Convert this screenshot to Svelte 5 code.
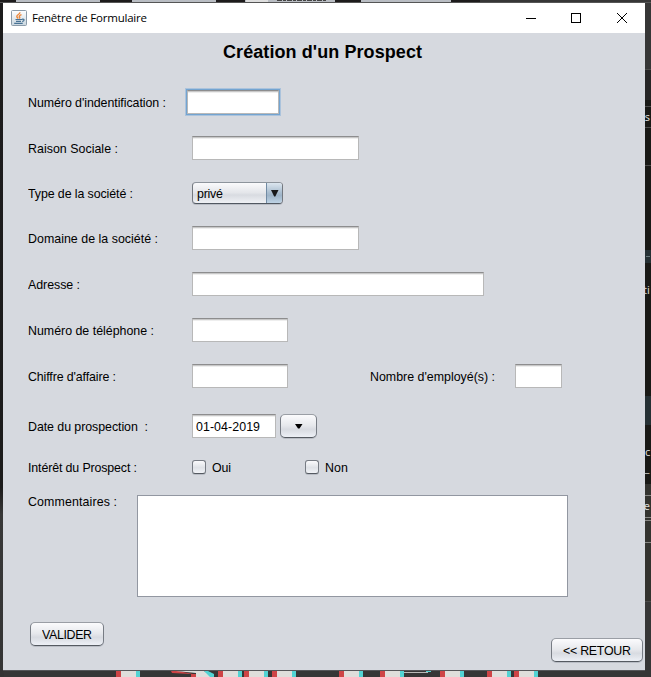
<script>
  const stripes = [116, 218, 244, 272, 339, 380, 440, 487, 514];
  const fields = [
    { label: 'Raison Sociale :', top: 136, width: 167, text: 90 },
    { label: 'Type de la société :', top: 181, select: 'privé', text: 105 },
    { label: 'Domaine de la société :', top: 226, width: 167, text: 130 },
    { label: 'Adresse :', top: 272, width: 292, text: 52 },
    { label: 'Numéro de téléphone :', top: 318, width: 96, text: 126 },
    { label: "Chiffre d'affaire :", top: 364, width: 96, text: 88, extra: true },
    { label: 'Date du prospection\u00a0 :', top: 414, width: 84, text: 120, date: true }
  ];
  const rows = fields.map((f, i) => ({ ...f, gap: f.top - (i ? fields[i - 1].top + 24 : 114) }));
</script>

{#snippet label(t, w)}
  <svg class="text" width={w + 2} height="24"><text x="0" y="17" textLength={w}>{t}</text></svg>
{/snippet}

<div class="desktop">
  <svg class="backdrop" width="651" height="677" viewBox="0 0 651 677">
    <defs>
      <linearGradient id="left" x2="0" y2="1">
        <stop offset="0" stop-color="#1d1c1d" /><stop offset=".72" stop-color="#1c1b1b" />
        <stop offset=".76" stop-color="#383838" /><stop offset="1" stop-color="#343434" />
      </linearGradient>
    </defs>
    <rect width="651" height="677" fill="#363636" />
    <rect width="4" height="677" fill="url(#left)" />
    <rect width="480" height="3" fill="#1d1b1c" />
    <path d="M16 0h84v2H16zM132 0h84v2h-84zM245 0h90v2h-90zM361 0h90v2h-90z" fill="#b9bdc3" />
    <rect x="246" width="22" height="2" fill="#dedede" />
    <path d="M277 .5h49" stroke="#444" stroke-dasharray="5 1 3 1" />
    <path d="M0 2.5h651" stroke="#555" />
    <rect x="645" y="70" width="6" height="30" fill="#262626" />
    <rect x="645" y="100" width="6" height="384" fill="#191916" />
    <rect x="645" y="250" width="6" height="13" fill="#253034" />
    <rect x="645" y="396" width="6" height="29" fill="#253034" />
    <rect x="645" y="484" width="6" height="117" fill="#33332f" />
    <path d="M645 69.500h6M645 106.500h6M645 127.500h6M645 165.500h6M645 601.500h6" stroke="#4b4b4a" />
    <path d="M645 495.500h6M645 517.500h6M645 520.500h6M645 542.500h6" stroke="#868683" />
    <path d="M646 256.500h4" stroke="#66777a" />
    <g class="behind">
      <text x="638.500" y="121">es</text><text x="643" y="294">ti</text>
      <text x="645" y="456">c</text><text x="640" y="472">r_</text><text x="641" y="510">le</text>
    </g>
    {#each stripes as x}
      <rect {x} y="670" width="6" height="7" fill="#ce4446" />
      <rect x={x + 5} y="670" width="15" height="7" fill="#dfdedb" />
      <rect x={x + 20} y="670" width="4" height="7" fill="#52d3d3" />
    {/each}
    <path d="M171 671h7l15 3h3v3h-5v-3l-19-1z" fill="#ce4446" />
    <path d="M176 671h28l6 4v2h-14v-4z" fill="#dfdedb" />
    <path d="M204 671h4l6 3v3h-4z" fill="#52d3d3" />
    <path d="M404 672.500h24" stroke="#bab9b7" /><path d="M426 671.500h5" stroke="#52d3d3" />
    <path d="M3 670.500h642" stroke="#555558" />
  </svg>

  <main class="window">
    <header>
      <svg class="java" width="16" height="16" viewBox="0 0 16 16">
        <defs><linearGradient id="ic" x2="0" y2="1"><stop stop-color="#fff" /><stop offset="1" stop-color="#c9d6df" /></linearGradient></defs>
        <rect x=".5" y=".5" width="15" height="15" rx="1" fill="url(#ic)" stroke="#8b9ba9" />
        <path d="M8.800 2.200C9.500 4.300 5.300 4.600 5.800 6.500Q6 7.400 7.300 8.300M10.500 4.700C8 5.500 8 6.500 8.700 7.200q.4.700-.5 1.300" fill="none" stroke="#ed8739" stroke-width="1.400" />
        <path d="M4.500 9.500h6.500M5 11.300h5M3.200 13.400h8.500M11 9.300c3-.6 2.500 1.800.2 2.300" fill="none" stroke="#487294" stroke-width="1.200" />
      </svg>
      <svg class="caption" width="130" height="24"><text x="0" y="16" textLength="115">Fenêtre de Formulaire</text></svg>
      <svg class="controls" width="104" height="12" viewBox="0 0 104 12" fill="none" stroke="#000" shape-rendering="crispEdges">
        <path d="M0 6.500h10M45.500 1.500h9v9h-9z" /><path d="M91 1l10 10M101 1L91 11" shape-rendering="auto" />
      </svg>
    </header>

    <section class="form">
      <h1><svg width="204" height="28"><text x="1" y="20" textLength="199">Création d'un Prospect</text></svg></h1>
      <div class="row first">
        <div class="label">{@render label("Numéro d'indentification :", 138)}</div>
        <input class="focused" aria-label="Numéro d'indentification" />
      </div>
      {#each rows as row}
        <div class="row" style:margin-top="{row.gap}px">
          <div class="label">{@render label(row.label, row.text)}</div>
          {#if row.select}
            <div class="combo">
              <span>{@render label(row.select, 26)}</span>
              <i><svg width="8" height="7"><path d="M0 0h7.500L4.300 6.500H3.200z" fill="#18191b" /></svg></i>
            </div>
          {:else if row.date}
            <div class="field" style:width="{row.width}px">{@render label('01-04-2019', 64)}</div>
            <button class="drop" aria-label="Date"><svg width="8" height="5"><path d="M0 0h7.500L4.500 4.500H3z" /></svg></button>
          {:else}
            <input aria-label={row.label} style:width="{row.width}px" />
          {/if}
          {#if row.extra}
            <div class="employees">{@render label("Nombre d'employé(s) :", 125)}</div>
            <input class="small" aria-label="Nombre d'employé(s)" />
          {/if}
        </div>
      {/each}
      <div class="row interest">
        <div class="label">{@render label('Intérêt du Prospect :', 109)}</div>
        <div class="choice"><b></b>{@render label('Oui', 19)}</div>
        <div class="choice"><b></b>{@render label('Non', 23)}</div>
      </div>
      <div class="comments">
        <div class="label">{@render label('Commentaires :', 89)}</div>
        <textarea aria-label="Commentaires"></textarea>
      </div>
      <footer>
        <button class="ok">{@render label('VALIDER', 50)}</button>
        <button class="back">{@render label('<< RETOUR', 68)}</button>
      </footer>
    </section>
  </main>
</div>

<style>
  :global(body) { margin: 0; overflow: hidden; }
  * { box-sizing: border-box; }
  .desktop { position: relative; width: 651px; height: 677px; padding: 3px; overflow: hidden; background: #363636; }
  .backdrop { position: absolute; left: 0; top: 0; }
  .behind { font: 11px "Noto Sans", sans-serif; fill: #d9d9d6; }
  .window { position: relative; width: 642px; height: 667px; background: #d6d9df; font: 12.4px "Liberation Sans", Arial, sans-serif; color: #000; }
  svg { display: block; flex: none; }
  header { height: 30px; background: #fff; display: flex; align-items: center; padding-left: 8px; }
  .caption { margin-left: 5px; font-family: "Open Sans", "Noto Sans", sans-serif; font-size: 11.5px; }
  .controls { margin-left: auto; margin-right: 15px; }
  .form { display: flex; flex-direction: column; height: 637px; }
  h1 { margin: 5px 0 0 219px; height: 28px; font-size: 18px; font-weight: 700; }
  .row { display: flex; height: 24px; flex: none; padding-left: 25px; }
  .first { margin-top: 24px; }
  .label { width: 164px; flex: none; }
  input, .field { display: block; height: 24px; margin: 0; padding: 0 0 0 4px; border: 1px solid #b8b8b8; border-top-color: #8d8d8e; border-radius: 0; outline: 0; background: linear-gradient(#c8c8c8 0 1px, #eee 1px 2px, #fff 2px); }
  .field { padding: 0 0 0 3px; }
  .field .text { margin-top: -1px; }
  .text { margin-top: 0; }
  .focused { width: 92px; margin-left: -5px; box-shadow: 0 0 0 1px #73a4d1, 0 0 0 2px #abc3dc; }
  .combo { display: flex; width: 91px; height: 22px; margin-top: 1px; border: 1px solid #73787f; border-top-color: #8d949c; border-bottom-color: #515861; border-radius: 4px; overflow: hidden; background: linear-gradient(#fafafc, #e4e6ea 48%, #d8dbe1 60%, #eff1f5); box-shadow: 0 1px #b9bdc5; }
  .combo span { width: 73px; padding-left: 4px; margin-top: -2px; }
  .combo i { flex: 1; display: flex; align-items: center; justify-content: center; border-left: 1px solid #718ba4; background: linear-gradient(#dce6ef, #a9bdcf 48%, #9eb4c8 62%, #bed3e5); }
  button { display: flex; align-items: center; justify-content: center; height: 24px; padding: 0; margin: 0; border: 1px solid #777c84; border-top-color: #9a9ea5; border-bottom-color: #555a61; border-radius: 5px; background: linear-gradient(#fbfbfd, #e6e8ec 48%, #d8dbe1 65%, #edf0f6); box-shadow: 0 1px #b9bdc5; font: 12.4px "Liberation Sans", Arial, sans-serif; color: #000; }
  .drop { width: 37px; margin-left: 4px; }
  .employees { margin-left: 82px; width: 145px; }
  .small { width: 47px; }
  .interest { margin-top: 17px; }
  .choice { display: flex; width: 113px; }
  .choice b { width: 14px; height: 14px; margin: 5px 6px 0 0; border: 1px solid #777c84; border-bottom-color: #555a61; border-radius: 3px; background: linear-gradient(#fafafc, #dfe2e7 55%, #f1f3f7); box-shadow: 0 1px #b9bdc5; }
  .comments { display: flex; height: 102px; margin-top: 16px; padding-left: 25px; }
  .comments .label { width: 109px; margin-top: -6px; }
  textarea { display: block; width: 431px; height: 102px; margin: 0; padding: 0; resize: none; outline: 0; border: 1px solid #9297a1; border-radius: 0; background: #fff; }
  footer { display: flex; justify-content: space-between; padding: 25px 2px 0 27px; }
  .ok { width: 74px; padding-left: 2px; }
  .back { width: 92px; margin-top: 16px; padding-left: 2px; }
</style>
